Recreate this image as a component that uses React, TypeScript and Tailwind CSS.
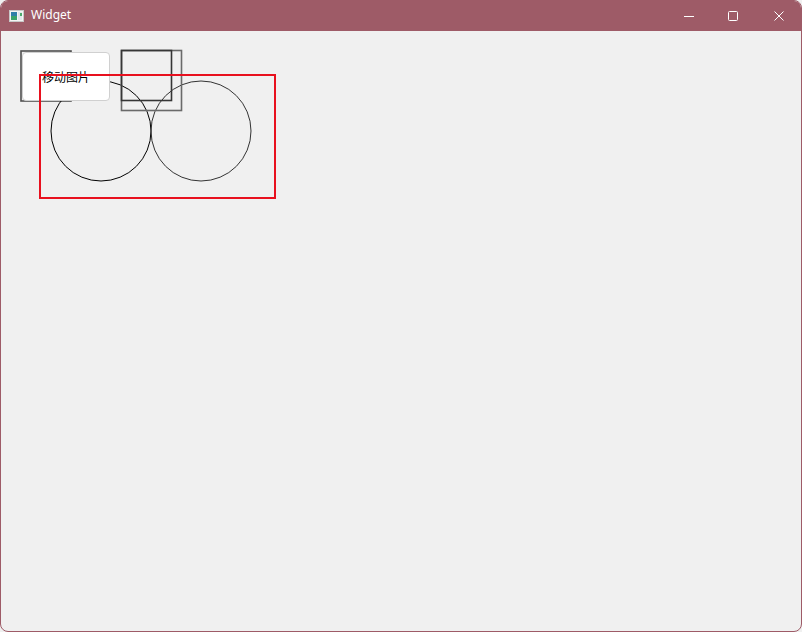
import React from 'react';

const TitleBar: React.FC = () => (
  <div className="relative h-[30px] bg-[#9e5b67] text-white flex items-center">
    <svg className="absolute left-[8px] top-[9px]" width="15" height="12" viewBox="0 0 15 12">
      <rect x="0.5" y="0.5" width="14" height="11" fill="#f4f4f4" stroke="#c8c8c8" />
      <rect x="2" y="2" width="6" height="8" fill="#2f7fa8" />
      <rect x="2" y="6" width="6" height="4" fill="#3aa36a" />
      <rect x="9" y="2" width="4" height="8" fill="#dfe6ea" />
      <rect x="11" y="3" width="2" height="3" fill="#4aa86a" />
    </svg>
    <span className="absolute left-[30px] top-[7px] text-[12px] leading-[14px] font-['Noto_Sans',sans-serif]">Widget</span>
    <svg className="absolute left-[682px] top-[9px]" width="12" height="12" viewBox="0 0 12 12">
      <line x1="1" y1="6.5" x2="11" y2="6.5" stroke="white" strokeWidth="1" />
    </svg>
    <svg className="absolute left-[726px] top-[9px]" width="12" height="12" viewBox="0 0 12 12">
      <rect x="1.5" y="1.5" width="9" height="9" rx="1" fill="none" stroke="white" strokeWidth="1" />
    </svg>
    <svg className="absolute left-[772px] top-[9px]" width="12" height="12" viewBox="0 0 12 12">
      <path d="M1.5 1.5 L10.5 10.5 M10.5 1.5 L1.5 10.5" stroke="white" strokeWidth="1" />
    </svg>
  </div>
);

const App: React.FC = () => {
  return (
    <div className="w-[802px] h-[632px] bg-[#f0f0f0]">
      <div className="w-[802px] h-[632px] border border-[#9e5b67] rounded-[8px] overflow-hidden flex flex-col bg-[#f0f0f0]">
        <TitleBar />
        <div className="relative flex-1">
          {/* shapes behind the button */}
          <svg className="absolute left-0 top-0" width="800" height="600" viewBox="1 31 800 600">
            <rect x="21" y="51" width="50" height="50" fill="none" stroke="#505050" strokeWidth="1.6" />
            <circle cx="101" cy="131" r="50" fill="none" stroke="#000" strokeWidth="1" />
            <circle cx="201" cy="131" r="50" fill="none" stroke="#333" strokeWidth="1" />
            <rect x="121.5" y="50.5" width="60" height="60" fill="none" stroke="#6a6a6a" strokeWidth="1.6" />
            <rect x="121.5" y="50.5" width="50" height="50" fill="none" stroke="#363636" strokeWidth="1.6" />
          </svg>
          <button className="absolute left-[21px] top-[21px] w-[88px] h-[49px] bg-white border border-[#d0d0d0] rounded-[4px] text-[12px] text-black font-['Noto_Sans_CJK_SC',sans-serif] flex items-center justify-center">
            移动图片
          </button>
          {/* red frame on top */}
          <svg className="absolute left-0 top-0 pointer-events-none" width="800" height="600" viewBox="1 31 800 600">
            <rect x="40" y="75" width="235" height="123" fill="none" stroke="#e8101e" strokeWidth="2" />
          </svg>
        </div>
      </div>
    </div>
  );
};

export default App;
